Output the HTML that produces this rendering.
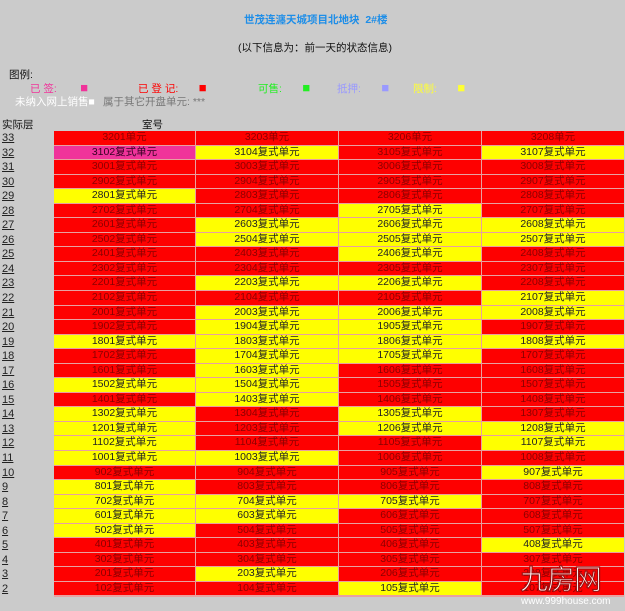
<!DOCTYPE html>
<html><head><meta charset="utf-8"><style>
html,body{margin:0;padding:0;}
body{width:625px;height:611px;background:#cbcbcb;font-family:"Liberation Sans","Noto Sans CJK SC",sans-serif;font-size:11px;position:relative;overflow:hidden;color:#111;}
.abs{position:absolute;white-space:nowrap;}
#grid{position:absolute;left:54px;top:131px;width:570px;}
.row{position:relative;height:14.56px;}
.fl{position:absolute;left:-52px;top:0;line-height:14px;text-decoration:underline;color:#222;font-size:11px;}
.c{position:absolute;top:0;height:13.5px;line-height:13.5px;text-align:center;font-size:10.5px;}
.c0{left:0;width:141px}.c1{left:142px;width:142px}.c2{left:285px;width:142px}.c3{left:428px;width:142px}
.R{background:#fe0000;color:#8a0000}.Y{background:#ffff00;color:#222}.P{background:#f0339a;color:#330022}
#grid .row{background:#e8a0a0;}
.sq{font-size:13px;}
</style></head><body>
<div class="abs" style="left:244px;top:12px;color:#1e8ee8;font-weight:bold;font-size:10.5px">世茂连瀍天城项目北地块&nbsp; 2#楼</div>
<div class="abs" style="left:238px;top:40px;font-size:10.5px">(以下信息为：前一天的状态信息)</div>
<div class="abs" style="left:9px;top:67px;font-size:10.5px">图例:</div>
<div class="abs" style="left:30px;top:80px;color:#f0339a;font-size:10.5px">已 签:&nbsp;&nbsp;&nbsp;&nbsp;&nbsp;&nbsp;&nbsp;&nbsp;<span class="sq">■</span></div>
<div class="abs" style="left:138px;top:80px;color:#fe0000;font-size:10.5px">已 登 记:&nbsp;&nbsp;&nbsp;&nbsp;&nbsp;&nbsp;&nbsp;<span class="sq">■</span></div>
<div class="abs" style="left:258px;top:80px;color:#22ee22;font-size:10.5px">可售:&nbsp;&nbsp;&nbsp;&nbsp;&nbsp;&nbsp;&nbsp;<span class="sq">■</span></div>
<div class="abs" style="left:337px;top:80px;color:#9999ff;font-size:10.5px">抵押:&nbsp;&nbsp;&nbsp;&nbsp;&nbsp;&nbsp;&nbsp;<span class="sq">■</span></div>
<div class="abs" style="left:413px;top:80px;color:#ffff33;font-size:10.5px">限制:&nbsp;&nbsp;&nbsp;&nbsp;&nbsp;&nbsp;&nbsp;<span class="sq">■</span></div>
<div class="abs" style="left:15px;top:94px;color:#fff;font-size:10.5px">未纳入网上销售■</div>
<div class="abs" style="left:103px;top:94px;color:#777;font-size:10.5px">属于其它开盘单元: ***</div>
<div class="abs" style="left:2px;top:117px;font-size:10.5px">实际层</div>
<div class="abs" style="left:142px;top:117px;font-size:10.5px">室号</div>
<div id="grid">
<div class="row"><span class="fl">33</span><div class="c c0 R">3201单元</div><div class="c c1 R">3203单元</div><div class="c c2 R">3206单元</div><div class="c c3 R">3208单元</div></div>
<div class="row"><span class="fl">32</span><div class="c c0 P">3102复式单元</div><div class="c c1 Y">3104复式单元</div><div class="c c2 R">3105复式单元</div><div class="c c3 Y">3107复式单元</div></div>
<div class="row"><span class="fl">31</span><div class="c c0 R">3001复式单元</div><div class="c c1 R">3003复式单元</div><div class="c c2 R">3006复式单元</div><div class="c c3 R">3008复式单元</div></div>
<div class="row"><span class="fl">30</span><div class="c c0 R">2902复式单元</div><div class="c c1 R">2904复式单元</div><div class="c c2 R">2905复式单元</div><div class="c c3 R">2907复式单元</div></div>
<div class="row"><span class="fl">29</span><div class="c c0 Y">2801复式单元</div><div class="c c1 R">2803复式单元</div><div class="c c2 R">2806复式单元</div><div class="c c3 R">2808复式单元</div></div>
<div class="row"><span class="fl">28</span><div class="c c0 R">2702复式单元</div><div class="c c1 R">2704复式单元</div><div class="c c2 Y">2705复式单元</div><div class="c c3 R">2707复式单元</div></div>
<div class="row"><span class="fl">27</span><div class="c c0 R">2601复式单元</div><div class="c c1 Y">2603复式单元</div><div class="c c2 Y">2606复式单元</div><div class="c c3 Y">2608复式单元</div></div>
<div class="row"><span class="fl">26</span><div class="c c0 R">2502复式单元</div><div class="c c1 Y">2504复式单元</div><div class="c c2 Y">2505复式单元</div><div class="c c3 Y">2507复式单元</div></div>
<div class="row"><span class="fl">25</span><div class="c c0 R">2401复式单元</div><div class="c c1 R">2403复式单元</div><div class="c c2 Y">2406复式单元</div><div class="c c3 R">2408复式单元</div></div>
<div class="row"><span class="fl">24</span><div class="c c0 R">2302复式单元</div><div class="c c1 R">2304复式单元</div><div class="c c2 R">2305复式单元</div><div class="c c3 R">2307复式单元</div></div>
<div class="row"><span class="fl">23</span><div class="c c0 R">2201复式单元</div><div class="c c1 Y">2203复式单元</div><div class="c c2 Y">2206复式单元</div><div class="c c3 R">2208复式单元</div></div>
<div class="row"><span class="fl">22</span><div class="c c0 R">2102复式单元</div><div class="c c1 R">2104复式单元</div><div class="c c2 R">2105复式单元</div><div class="c c3 Y">2107复式单元</div></div>
<div class="row"><span class="fl">21</span><div class="c c0 R">2001复式单元</div><div class="c c1 Y">2003复式单元</div><div class="c c2 Y">2006复式单元</div><div class="c c3 Y">2008复式单元</div></div>
<div class="row"><span class="fl">20</span><div class="c c0 R">1902复式单元</div><div class="c c1 Y">1904复式单元</div><div class="c c2 Y">1905复式单元</div><div class="c c3 R">1907复式单元</div></div>
<div class="row"><span class="fl">19</span><div class="c c0 Y">1801复式单元</div><div class="c c1 Y">1803复式单元</div><div class="c c2 Y">1806复式单元</div><div class="c c3 Y">1808复式单元</div></div>
<div class="row"><span class="fl">18</span><div class="c c0 R">1702复式单元</div><div class="c c1 Y">1704复式单元</div><div class="c c2 Y">1705复式单元</div><div class="c c3 R">1707复式单元</div></div>
<div class="row"><span class="fl">17</span><div class="c c0 R">1601复式单元</div><div class="c c1 Y">1603复式单元</div><div class="c c2 R">1606复式单元</div><div class="c c3 R">1608复式单元</div></div>
<div class="row"><span class="fl">16</span><div class="c c0 Y">1502复式单元</div><div class="c c1 Y">1504复式单元</div><div class="c c2 R">1505复式单元</div><div class="c c3 R">1507复式单元</div></div>
<div class="row"><span class="fl">15</span><div class="c c0 R">1401复式单元</div><div class="c c1 Y">1403复式单元</div><div class="c c2 R">1406复式单元</div><div class="c c3 R">1408复式单元</div></div>
<div class="row"><span class="fl">14</span><div class="c c0 Y">1302复式单元</div><div class="c c1 R">1304复式单元</div><div class="c c2 Y">1305复式单元</div><div class="c c3 R">1307复式单元</div></div>
<div class="row"><span class="fl">13</span><div class="c c0 Y">1201复式单元</div><div class="c c1 R">1203复式单元</div><div class="c c2 Y">1206复式单元</div><div class="c c3 Y">1208复式单元</div></div>
<div class="row"><span class="fl">12</span><div class="c c0 Y">1102复式单元</div><div class="c c1 R">1104复式单元</div><div class="c c2 R">1105复式单元</div><div class="c c3 Y">1107复式单元</div></div>
<div class="row"><span class="fl">11</span><div class="c c0 Y">1001复式单元</div><div class="c c1 Y">1003复式单元</div><div class="c c2 R">1006复式单元</div><div class="c c3 R">1008复式单元</div></div>
<div class="row"><span class="fl">10</span><div class="c c0 R">902复式单元</div><div class="c c1 R">904复式单元</div><div class="c c2 R">905复式单元</div><div class="c c3 Y">907复式单元</div></div>
<div class="row"><span class="fl">9</span><div class="c c0 Y">801复式单元</div><div class="c c1 R">803复式单元</div><div class="c c2 R">806复式单元</div><div class="c c3 R">808复式单元</div></div>
<div class="row"><span class="fl">8</span><div class="c c0 Y">702复式单元</div><div class="c c1 Y">704复式单元</div><div class="c c2 Y">705复式单元</div><div class="c c3 R">707复式单元</div></div>
<div class="row"><span class="fl">7</span><div class="c c0 Y">601复式单元</div><div class="c c1 Y">603复式单元</div><div class="c c2 R">606复式单元</div><div class="c c3 R">608复式单元</div></div>
<div class="row"><span class="fl">6</span><div class="c c0 Y">502复式单元</div><div class="c c1 R">504复式单元</div><div class="c c2 R">505复式单元</div><div class="c c3 R">507复式单元</div></div>
<div class="row"><span class="fl">5</span><div class="c c0 R">401复式单元</div><div class="c c1 R">403复式单元</div><div class="c c2 R">406复式单元</div><div class="c c3 Y">408复式单元</div></div>
<div class="row"><span class="fl">4</span><div class="c c0 R">302复式单元</div><div class="c c1 R">304复式单元</div><div class="c c2 R">305复式单元</div><div class="c c3 R">307复式单元</div></div>
<div class="row"><span class="fl">3</span><div class="c c0 R">201复式单元</div><div class="c c1 Y">203复式单元</div><div class="c c2 R">206复式单元</div><div class="c c3 R">208复式单元</div></div>
<div class="row"><span class="fl">2</span><div class="c c0 R">102复式单元</div><div class="c c1 R">104复式单元</div><div class="c c2 Y">105复式单元</div><div class="c c3 R">107复式单元</div></div>
</div>
<div class="abs" style="left:520px;top:565px;font-size:28px;color:#fff;-webkit-text-stroke:1.2px #a01010;letter-spacing:-1px;line-height:30px">九房网</div>
<div class="abs" style="left:521px;top:596px;font-size:10px;color:#fff;">www.999house.com</div>
</body></html>
